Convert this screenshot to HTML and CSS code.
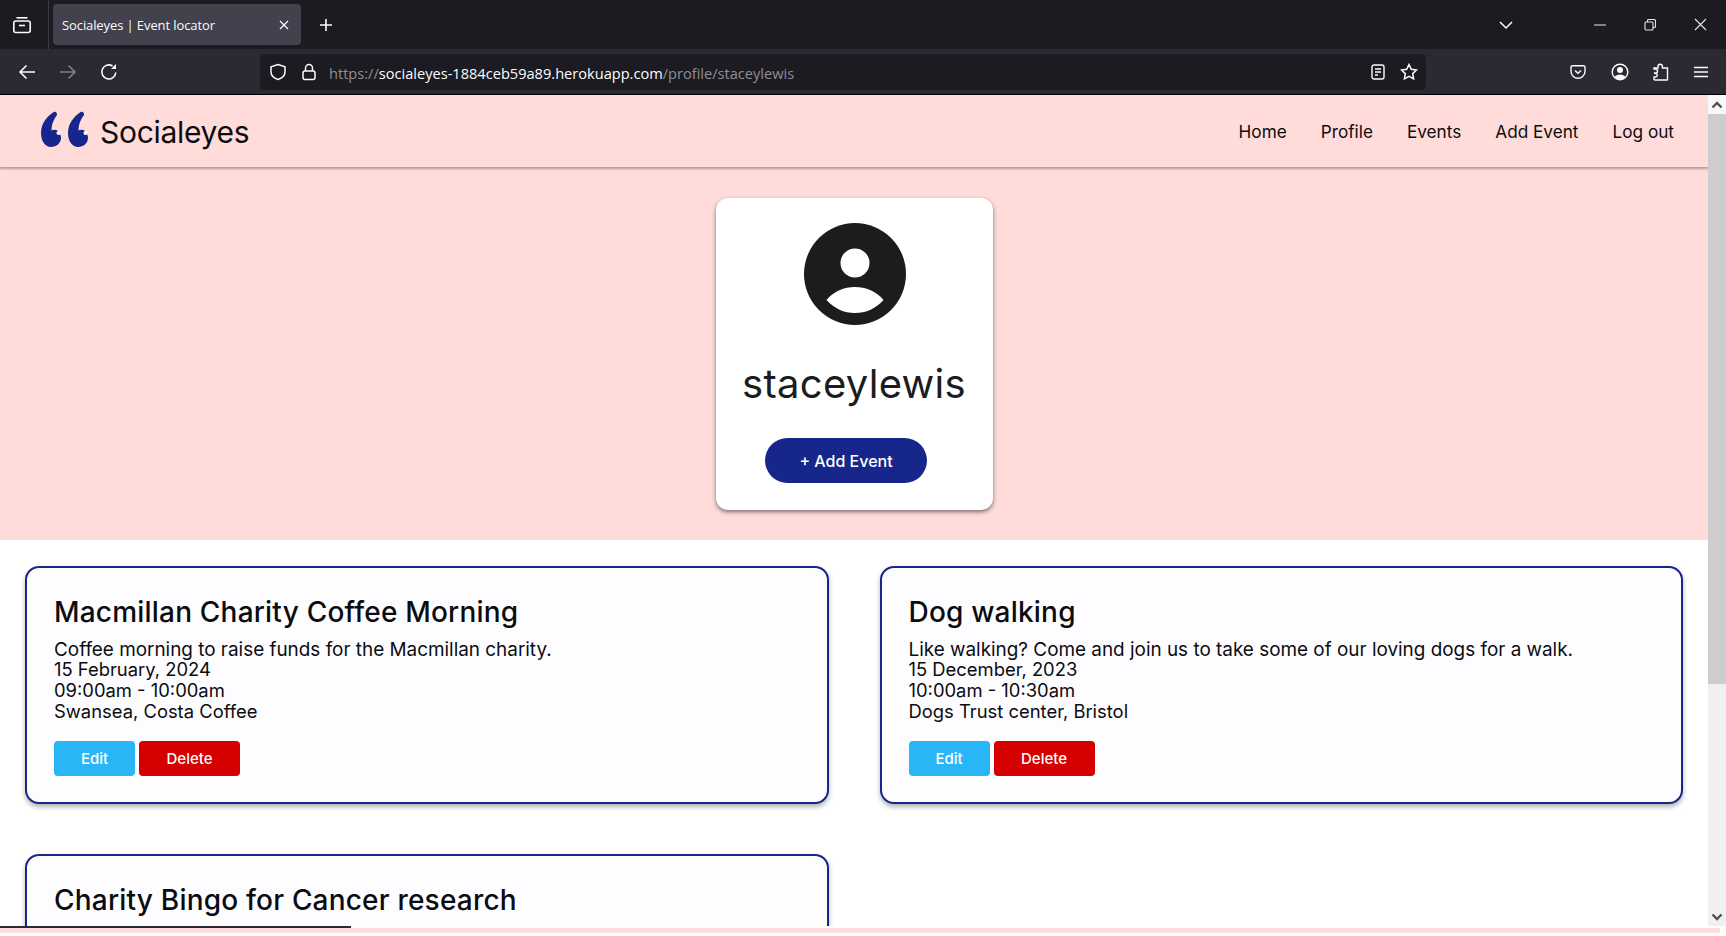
FILE: index.html
```html
<!doctype html>
<html lang="en">
<head>
    <meta charset="utf-8">
    <title>Socialeyes | Event locator</title>
    <link rel="stylesheet" href="styles.css">
</head>
<body>
    <div class="tabbar">
        <div class="tab-list-btn">
            <svg width="20" height="20" viewBox="0 0 20 20" fill="none" stroke="#fbfbfe" stroke-width="1.6"><path d="M4.500 2.800h11"/><rect x="1.800" y="6" width="16.400" height="11.500" rx="2"/><path d="M7 10.500h6"/></svg>
        </div>
        <div class="tab">
            <span class="tab-title">Socialeyes | Event locator</span>
            <svg width="12" height="12" viewBox="0 0 12 12" stroke="#fbfbfe" stroke-width="1.3"><path d="M2 2l8 8M10 2l-8 8"/></svg>
        </div>
        <svg class="new-tab" width="16" height="16" viewBox="0 0 16 16" stroke="#fbfbfe" stroke-width="1.6"><path d="M8 2v12M2 8h12"/></svg>
        <svg class="tab-menu" width="16" height="10" viewBox="0 0 16 10" fill="none" stroke="#fbfbfe" stroke-width="1.5"><path d="M2 2l6 6 6-6"/></svg>
        <div class="window-btns">
            <svg width="12" height="12" viewBox="0 0 12 12" stroke="#c9c9cf" stroke-width="1.2"><path d="M0 6h12"/></svg>
            <svg width="12" height="12" viewBox="0 0 12 12" fill="none" stroke="#e6e6ea" stroke-width="1.1"><rect x="1" y="3" width="8" height="8" rx="1"/><path d="M3.500 3V1.500q0-1 1-1h5.500q1.500 0 1.500 1.500v5.500q0 1-1 1H9"/></svg>
            <svg width="13" height="13" viewBox="0 0 13 13" stroke="#e6e6ea" stroke-width="1.1"><path d="M1 1l11 11M12 1L1 12"/></svg>
        </div>
    </div>

    <div class="toolbar">
        <div class="nav-btns">
            <svg width="18" height="16" viewBox="0 0 18 16" fill="none" stroke="#fbfbfe" stroke-width="1.6"><path d="M17 8H2M8.500 1.500L2 8l6.500 6.500"/></svg>
            <svg class="disabled" width="18" height="16" viewBox="0 0 18 16" fill="none" stroke="#fbfbfe" stroke-width="1.6"><path d="M1 8h15M9.500 1.500L16 8l-6.500 6.500"/></svg>
            <svg width="18" height="18" viewBox="0 0 18 18" fill="none" stroke="#fbfbfe" stroke-width="1.6"><path d="M15.800 9.500A7 7 0 1 1 12.500 3"/><path d="M16 1v5h-5z" fill="#fbfbfe" stroke="none"/></svg>
        </div>
        <div class="urlbar">
            <svg width="18" height="18" viewBox="0 0 18 18" fill="none" stroke="#fbfbfe" stroke-width="1.5"><path d="M9 1.500l7 2.300v5c0 4-3.200 6.500-7 7.700-3.800-1.200-7-3.700-7-7.700v-5z"/></svg>
            <svg class="lock" width="16" height="18" viewBox="0 0 16 18" fill="none" stroke="#fbfbfe" stroke-width="1.5"><rect x="2" y="8" width="12" height="8.500" rx="2"/><path d="M4.500 8V5a3.500 3.500 0 0 1 7 0v3"/></svg>
            <span class="url"><span class="url-dim">https://</span>socialeyes-1884ceb59a89.herokuapp.com<span class="url-dim">/profile/staceylewis</span></span>
            <svg class="reader" width="14" height="16" viewBox="0 0 14 16" fill="none" stroke="#fbfbfe" stroke-width="1.4"><rect x="1" y="1" width="12" height="14" rx="2"/><path d="M4 5h6M4 8h6M4 11h3"/></svg>
            <svg width="18" height="18" viewBox="0 0 18 18" fill="none" stroke="#fbfbfe" stroke-width="1.5"><path d="M9 1.500l2.300 4.800 5.200.7-3.800 3.600.9 5.200L9 13.300l-4.600 2.500.9-5.200L1.500 7l5.200-.7z"/></svg>
        </div>
        <div class="tool-btns">
            <svg width="16" height="16" viewBox="0 0 16 16" fill="none" stroke="#fbfbfe" stroke-width="1.4"><path d="M2.500 1.800h11q1.500 0 1.500 1.500v4a7 7 0 0 1-14 0v-4q0-1.500 1.500-1.500z"/><path d="M5 6.500L8 9.300l3-2.800"/></svg>
            <svg width="18" height="18" viewBox="0 0 18 18" fill="none" stroke="#fbfbfe" stroke-width="1.4"><circle cx="9" cy="9" r="7.800"/><circle cx="9" cy="7" r="3" fill="#fbfbfe" stroke="none"/><path d="M3.500 13.500q5.500-4 11 0l-2.500 2.500h-6z" fill="#fbfbfe" stroke="none"/></svg>
            <svg width="16" height="18" viewBox="0 0 16 18" fill="none" stroke="#fbfbfe" stroke-width="1.4"><path d="M1 10h1.500a2 2 0 0 0 0-4H1V5h4V3.500a2.200 2.200 0 0 1 4.400 0V5h5.100v11.500q0 .5-.5.500H2q-1 0-1-1v-2h1.500a1.700 1.700 0 0 0 0-3.500z"/></svg>
            <svg width="14" height="12" viewBox="0 0 14 12" stroke="#fbfbfe" stroke-width="1.4"><path d="M0 1.500h14M0 6h14M0 10.500h14"/></svg>
        </div>
    </div>

    <div class="viewport">
        <div class="page">
            <nav class="navbar">
                <a class="brand" href="#">
                    <svg class="logo" width="48" height="36" viewBox="0 0 48 36">
                        <g id="quote-mark">
                            <path class="quote" d="M13 .8C5.500 5.500 0 13 0 22c0 8.500 4.500 14 10 14s10-4 10-9c0-1.500-.5-3-1.200-4L17 20c-2-1.500-4.500-1.500-6.500-.5 0-6.500 2.500-11.500 5.500-15.500.5-1.500-1-4-3-3.200z"/>
                            <circle class="quote-dot" cx="17.500" cy="22" r="2"/>
                        </g>
                        <use href="#quote-mark" x="27"/>
                    </svg>
                    <span class="brand-name">Socialeyes</span>
                </a>
                <ul class="nav-links">
                    <li><a href="#">Home</a></li>
                    <li><a href="#">Profile</a></li>
                    <li><a href="#">Events</a></li>
                    <li><a href="#">Add Event</a></li>
                    <li><a href="#">Log out</a></li>
                </ul>
            </nav>

            <section class="hero">
                <div class="profile-card">
                    <svg class="avatar" width="102" height="102" viewBox="0 0 102 102"><circle cx="51" cy="51" r="51" fill="#1b1c1e"/><circle cx="51" cy="40" r="14.500" fill="#fff"/><path d="M22.500 77C30 68 40 64 51 64S72 68 79.500 77C72 85.500 62 90 51 90S30 85.500 22.500 77z" fill="#fff"/></svg>
                    <h1 class="username">staceylewis</h1>
                    <a class="add-btn" href="#">+ Add Event</a>
                </div>
            </section>

            <section class="events">
                <article class="event-card">
                    <h2>Macmillan Charity Coffee Morning</h2>
                    <p class="event-desc">Coffee morning to raise funds for the Macmillan charity.</p>
                    <p class="event-meta">15 February, 2024<br>09:00am - 10:00am<br>Swansea, Costa Coffee</p>
                    <div class="event-actions">
                        <a class="btn btn-edit" href="#">Edit</a>
                        <a class="btn btn-delete" href="#">Delete</a>
                    </div>
                </article>
                <article class="event-card">
                    <h2>Dog walking</h2>
                    <p class="event-desc">Like walking? Come and join us to take some of our loving dogs for a walk.</p>
                    <p class="event-meta">15 December, 2023<br>10:00am - 10:30am<br>Dogs Trust center, Bristol</p>
                    <div class="event-actions">
                        <a class="btn btn-edit" href="#">Edit</a>
                        <a class="btn btn-delete" href="#">Delete</a>
                    </div>
                </article>
                <article class="event-card">
                    <h2>Charity Bingo for Cancer research</h2>
                </article>
            </section>
        </div>

        <div class="scrollbar">
            <div class="scroll-up"><svg width="12" height="8" viewBox="0 0 12 8" fill="none" stroke="#505050" stroke-width="2.400"><path d="M1.500 6.500L6 2l4.500 4.500"/></svg></div>
            <div class="scroll-thumb"></div>
            <div class="scroll-track"></div>
            <div class="scroll-down"><svg width="12" height="8" viewBox="0 0 12 8" fill="none" stroke="#505050" stroke-width="2.400"><path d="M1.500 1.500L6 6l4.500-4.500"/></svg></div>
        </div>
    </div>

    <div class="progress"><div class="progress-fill"></div></div>
    <div class="pink-strip"></div>
</body>
</html>
```

FILE: styles.css
```css
html {
    box-sizing: border-box;
}

*, *:before, *:after {
    box-sizing: inherit;
}

body, h1, h2, p, ul {
    margin: 0;
    padding: 0;
}

ul {
    list-style-type: none;
}

a {
    color: inherit;
    text-decoration: none;
}

:root {
    --navy: #16268a;
    --pink: #ffdcd9;
    --chrome-dark: #1c1b22;
    --chrome: #2b2a33;
}

body {
    height: 100vh;
    overflow: hidden;
    display: flex;
    flex-direction: column;
    background-color: #fff;
    font-family: Inter, "Noto Sans", sans-serif;
    color: #0c0c10;
}

/* browser chrome */
.tabbar {
    flex: none;
    height: 49px;
    display: flex;
    align-items: center;
    background-color: var(--chrome-dark);
    color: #fbfbfe;
}

.tab-list-btn {
    width: 49px;
    height: 49px;
    padding-right: 4px;
    display: flex;
    align-items: center;
    justify-content: center;
    border-right: 1px solid #3a3a42;
}

.tab {
    width: 248px;
    height: 41px;
    margin-left: 4px;
    padding: 0 11px 0 9px;
    display: flex;
    align-items: center;
    justify-content: space-between;
    background-color: #42414d;
    border-radius: 4px;
}

.tab-title {
    font-family: "Open Sans", sans-serif;
    font-size: 13px;
    letter-spacing: -0.1px;
}

.new-tab {
    margin-left: 17px;
}

.tab-menu {
    margin-left: auto;
}

.window-btns {
    width: 212px;
    padding: 0 19px 0 80px;
    display: flex;
    justify-content: space-between;
    align-items: center;
}

.toolbar {
    flex: none;
    height: 46px;
    display: flex;
    align-items: center;
    background-color: var(--chrome);
    border-bottom: 1px solid #000;
}

.nav-btns {
    width: 260px;
    padding: 0 0 0 18px;
    display: flex;
    align-items: center;
    gap: 23px;
}

.urlbar {
    width: 1166px;
    height: 36px;
    padding: 0 8px 0 9px;
    display: flex;
    align-items: center;
    background-color: var(--chrome-dark);
    border-radius: 4px;
}

.lock {
    margin-left: 14px;
}

.url {
    margin: 2px 0 0 12px;
    font-family: "Open Sans", sans-serif;
    font-size: 14.6px;
    color: #fbfbfe;
}

.url-dim {
    color: #8f8f96;
}

.reader {
    margin-left: auto;
    margin-right: 15px;
}

.tool-btns {
    flex: 1;
    padding: 0 18px 0 144px;
    display: flex;
    align-items: center;
    justify-content: space-between;
}

.disabled {
    opacity: 0.4;
}

/* page */
.viewport {
    flex: 1;
    min-height: 0;
    display: flex;
}

.page {
    flex: 1;
    min-width: 0;
    overflow: hidden;
}

.navbar {
    position: relative;
    height: 72px;
    padding: 0 34px 0 41px;
    display: flex;
    align-items: center;
    justify-content: space-between;
    background-color: var(--pink);
    box-shadow: 0 2px 2px rgba(0, 0, 0, 0.3);
}

.brand {
    display: flex;
    align-items: center;
    gap: 11px;
    font-size: 30px;
    letter-spacing: -0.3px;
}

.logo {
    margin-top: -5px;
}

.brand-name {
    margin-top: 2px;
}

.quote {
    fill: var(--navy);
}

.quote-dot {
    fill: #fff;
}

.nav-links {
    display: flex;
    gap: 34px;
    font-size: 17.2px;
}

.hero {
    height: 373px;
    padding-top: 31px;
    display: flex;
    justify-content: center;
    background-color: var(--pink);
}

.profile-card {
    width: 277px;
    height: 312px;
    padding-top: 25px;
    display: flex;
    flex-direction: column;
    align-items: center;
    background-color: #fff;
    border-radius: 12px;
    box-shadow: 0 2px 4px rgba(0, 0, 0, 0.5);
}

.avatar {
    margin-left: 2px;
}

.username {
    margin-top: 34px;
    font-size: 40px;
    font-weight: 400;
    letter-spacing: 0.3px;
    line-height: 50px;
    color: #1b1c1e;
}

.add-btn {
    width: 162px;
    height: 45px;
    margin: 29px 16px 0 0;
    display: flex;
    align-items: center;
    justify-content: center;
    background-color: var(--navy);
    color: #fff;
    font-size: 16px;
    font-weight: 500;
    border-radius: 23px;
}

.events {
    padding: 26px 25px 0;
    display: grid;
    grid-template-columns: 1fr 1fr;
    column-gap: 51px;
    row-gap: 50px;
}

.event-card {
    height: 238px;
    padding: 26px 27px;
    background-color: #fdfdff;
    border: 2px solid var(--navy);
    border-radius: 14px;
    box-shadow: 0 3px 5px rgba(0, 0, 0, 0.3);
}

.event-card h2 {
    font-size: 28px;
    font-weight: 500;
    letter-spacing: 0.2px;
    line-height: 36px;
}

.event-desc {
    margin-top: 9px;
    font-size: 18.9px;
    line-height: 21px;
}

.event-meta {
    margin-top: -1px;
    font-size: 18.4px;
    line-height: 21px;
}

.event-actions {
    margin-top: 19px;
    display: flex;
    gap: 4px;
}

.btn {
    height: 35px;
    display: flex;
    align-items: center;
    justify-content: center;
    color: #fff;
    font-size: 15px;
    font-weight: 500;
    border-radius: 4px;
}

.btn-edit {
    width: 81px;
    background-color: #29b6f6;
}

.btn-delete {
    width: 101px;
    background-color: #d50000;
}

/* scrollbar */
.scrollbar {
    flex: none;
    width: 18px;
    display: flex;
    flex-direction: column;
    background-color: #f0f0f0;
}

.scroll-up, .scroll-down {
    flex: none;
    height: 19px;
    display: flex;
    align-items: center;
    justify-content: center;
}

.scroll-up {
    background-color: #f8f8f8;
}

.scroll-thumb {
    flex: none;
    height: 570px;
    background-color: #cdcdcd;
}

.scroll-track {
    flex: 1;
}

.progress {
    flex: none;
    height: 2px;
    background-color: #fff;
}

.progress-fill {
    width: 351px;
    height: 2px;
    background-color: #2b2a33;
}

.pink-strip {
    flex: none;
    width: 1720px;
    height: 5px;
    margin-bottom: 3px;
    background-color: var(--pink);
}
```
